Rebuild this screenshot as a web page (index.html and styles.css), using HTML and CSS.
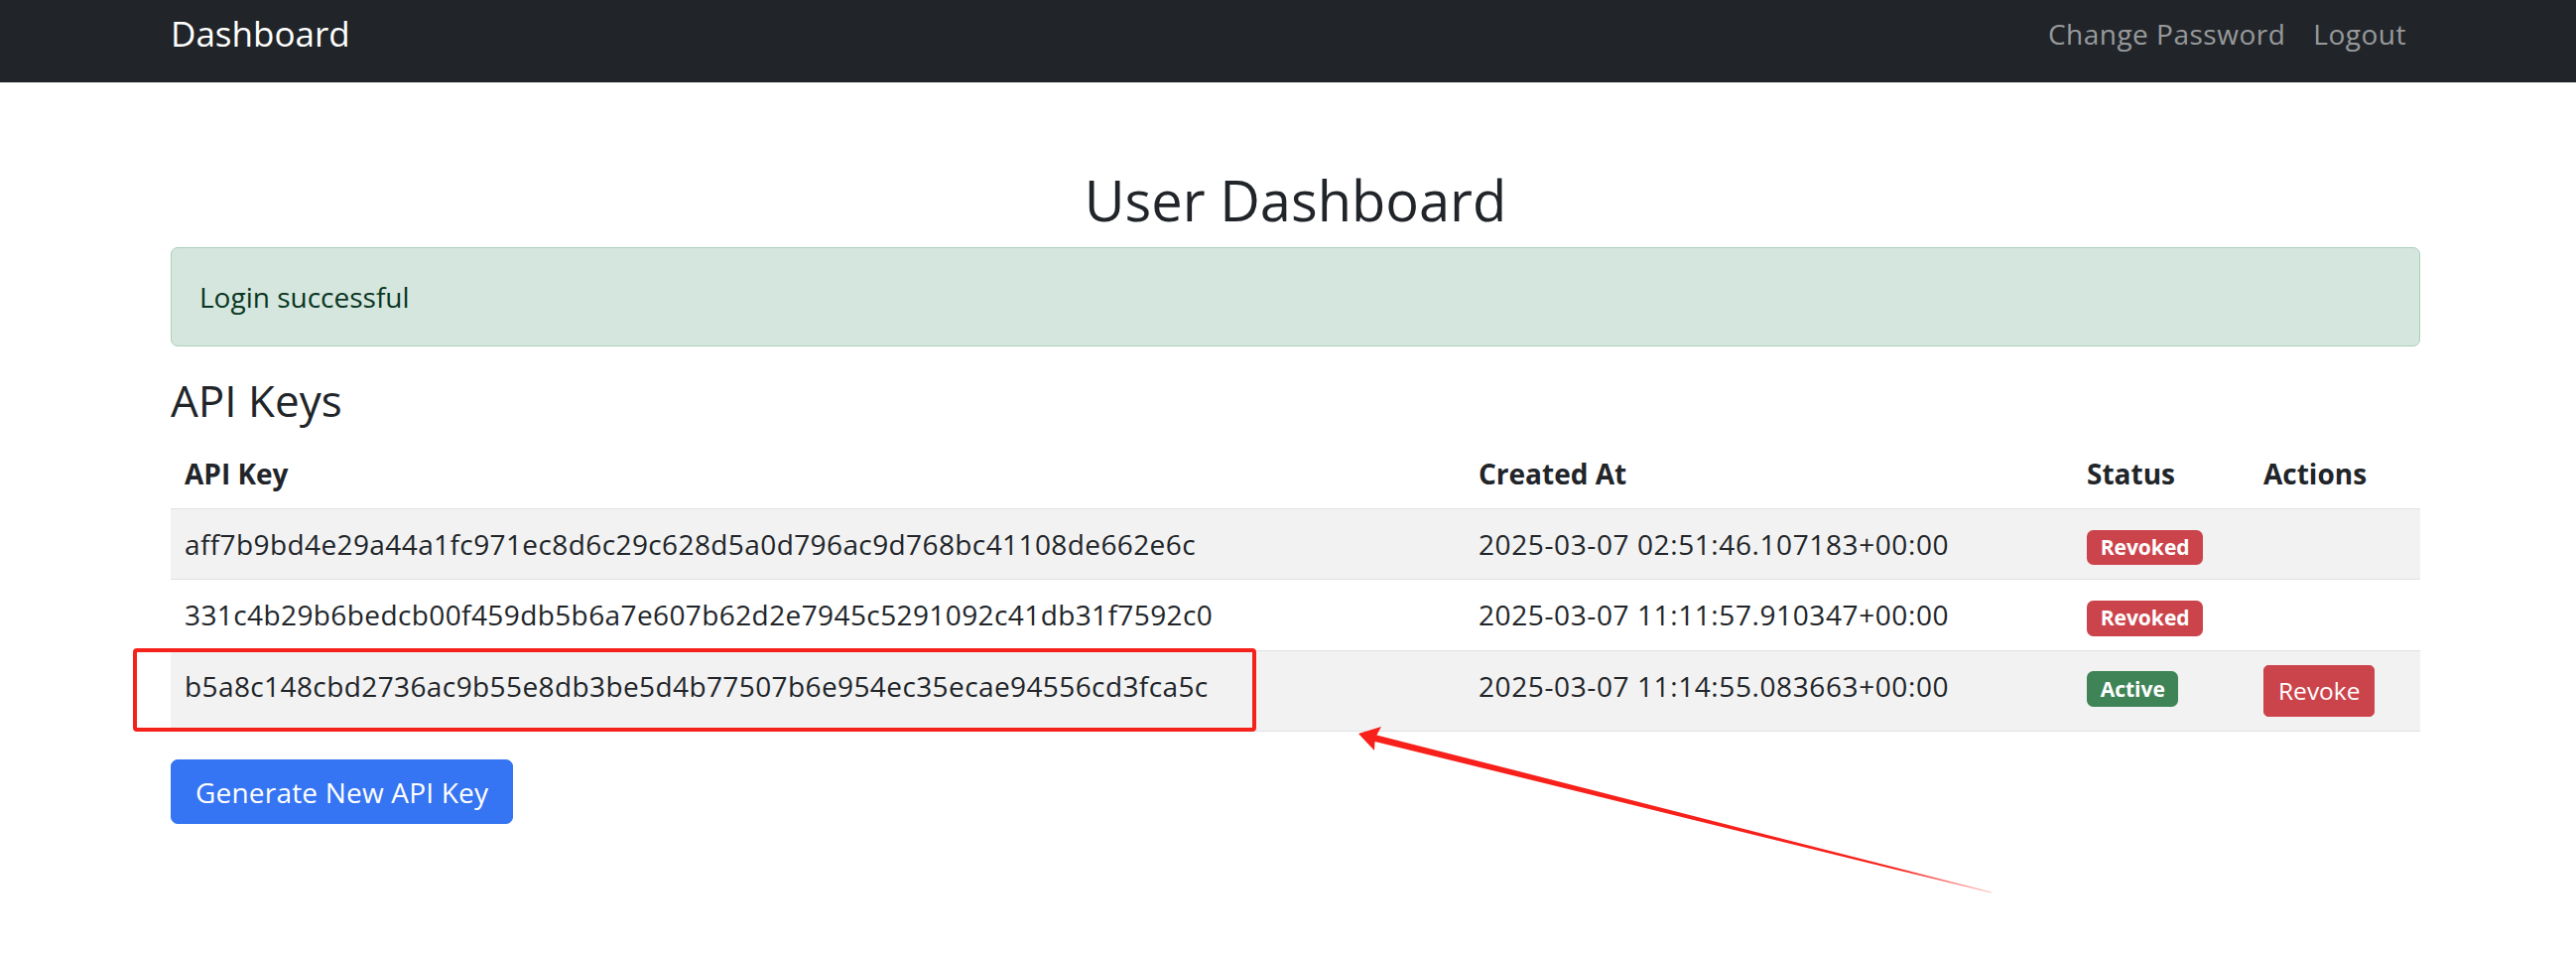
FILE: index.html
```html
<!DOCTYPE html>
<html lang="en">
<head>
<meta charset="utf-8">
<title>User Dashboard</title>
<link rel="stylesheet" href="styles.css">
</head>
<body>
<nav class="navbar">
  <div class="nav-inner">
    <a class="brand" href="#">Dashboard</a>
    <ul class="nav-links">
      <li><a href="#">Change Password</a></li>
      <li><a href="#">Logout</a></li>
    </ul>
  </div>
</nav>
<main class="container">
  <h1 class="page-title">User Dashboard</h1>
  <div class="alert">Login successful</div>
  <h3 class="section-title">API Keys</h3>
  <table class="keys">
    <colgroup>
      <col class="col-key">
      <col class="col-created">
      <col class="col-status">
      <col class="col-actions">
    </colgroup>
    <thead>
      <tr><th>API Key</th><th>Created At</th><th>Status</th><th>Actions</th></tr>
    </thead>
    <tbody>
      <tr class="striped">
        <td class="key">aff7b9bd4e29a44a1fc971ec8d6c29c628d5a0d796ac9d768bc41108de662e6c</td>
        <td class="date">2025-03-07 02:51:46.107183+00:00</td>
        <td><span class="badge badge-danger">Revoked</span></td>
        <td></td>
      </tr>
      <tr>
        <td class="key">331c4b29b6bedcb00f459db5b6a7e607b62d2e7945c5291092c41db31f7592c0</td>
        <td class="date">2025-03-07 11:11:57.910347+00:00</td>
        <td><span class="badge badge-danger">Revoked</span></td>
        <td></td>
      </tr>
      <tr class="striped">
        <td class="key">b5a8c148cbd2736ac9b55e8db3be5d4b77507b6e954ec35ecae94556cd3fca5c</td>
        <td class="date">2025-03-07 11:14:55.083663+00:00</td>
        <td><span class="badge badge-success">Active</span></td>
        <td><button class="btn-revoke">Revoke</button></td>
      </tr>
    </tbody>
  </table>
  <button class="btn-generate">Generate New API Key</button>
</main>
<div class="annot-box"></div>
<svg class="annot-arrow" width="660" height="185" viewBox="0 0 660 185">
  <defs>
    <linearGradient id="fade" gradientUnits="userSpaceOnUse" x1="0" y1="0" x2="648" y2="0">
      <stop offset="0.85" stop-color="#f7201a" stop-opacity="1"/>
      <stop offset="1" stop-color="#f7201a" stop-opacity="0.25"/>
    </linearGradient>
  </defs>
  <polygon fill="url(#fade)" points="9,14 32,7 27.4,15.5 647,173.6 646.5,174.6 25.6,22 25,31"/>
</svg>
</body>
</html>
```
FILE: styles.css
```css
html, body {
  margin: 0;
  padding: 0;
}

body {
  font-family: "Open Sans", "Noto Sans", sans-serif;
  font-size: 28px;
  line-height: 1.5;
  color: #212529;
  background: #ffffff;
  position: relative;
  min-height: 962px;
}

/* Navbar */
.navbar {
  background: #212529;
  height: 83px;
  box-sizing: border-box;
  padding-top: 8px;
}

.nav-inner {
  margin-left: 172px;
  width: 2267px;
  display: flex;
  justify-content: space-between;
  align-items: flex-start;
}

.brand {
  font-size: 35px;
  line-height: 52px;
  color: #ffffff;
  text-decoration: none;
}

.nav-links {
  list-style: none;
  margin: 5px 0 0;
  padding: 0;
  display: flex;
}

.nav-links a {
  display: block;
  padding: 0 14px;
  line-height: 42px;
  letter-spacing: 0.5px;
  color: rgba(255, 255, 255, 0.55);
  text-decoration: none;
}

/* Main */
.container {
  margin-left: 172px;
  width: 2267px;
  padding-top: 85px;
}

.page-title {
  font-size: 56px;
  font-weight: 400;
  line-height: 1.2;
  text-align: center;
  margin: 0 0 14px;
}

.alert {
  background: #d5e6de;
  border: 1px solid #aacfbc;
  color: #0a3622;
  padding: 28px;
  border-radius: 7px;
  margin-bottom: 28px;
}

.section-title {
  font-size: 44px;
  font-weight: 400;
  line-height: 1.2;
  margin: 0 0 12px;
}

/* Table */
.keys {
  width: 100%;
  border-collapse: collapse;
  table-layout: fixed;
  margin-bottom: 28px;
}

.col-key { width: 1304px; }
.col-created { width: 613px; }
.col-status { width: 178px; }
.col-actions { width: 172px; }

.keys th,
.keys td {
  padding: 14px;
  text-align: left;
  vertical-align: top;
  border-bottom: 1px solid #dee2e6;
  white-space: nowrap;
}

.keys th {
  font-weight: 700;
}

.keys td.key {
  letter-spacing: 0.4px;
}

.keys td.date {
  letter-spacing: 0.6px;
}

.keys tr.striped td {
  background: #f2f2f2;
}

.badge {
  display: inline-block;
  font-size: 21px;
  font-weight: 700;
  line-height: 1;
  padding: 7.35px 13.65px;
  border-radius: 6.5px;
  color: #ffffff;
}

.badge-danger { background: #cc444b; }
.badge-success { background: #3e8456; }

.btn-revoke {
  font-family: inherit;
  font-size: 24.5px;
  line-height: 1.5;
  padding: 7px 14px;
  border: 1.75px solid #cc444b;
  background: #cc444b;
  color: #ffffff;
  border-radius: 5px;
}

.btn-generate {
  font-family: inherit;
  font-size: 28px;
  line-height: 42px;
  padding: 10.5px 24px;
  letter-spacing: 0.2px;
  border: 1.75px solid #3574f2;
  background: #3574f2;
  color: #ffffff;
  border-radius: 7px;
}

/* Annotations drawn over the screenshot */
.annot-box {
  position: absolute;
  left: 134px;
  top: 653px;
  width: 1132px;
  height: 84px;
  box-sizing: border-box;
  border: 4px solid #f5221b;
  border-radius: 4px;
}

.annot-arrow {
  position: absolute;
  left: 1360px;
  top: 725px;
}
```
